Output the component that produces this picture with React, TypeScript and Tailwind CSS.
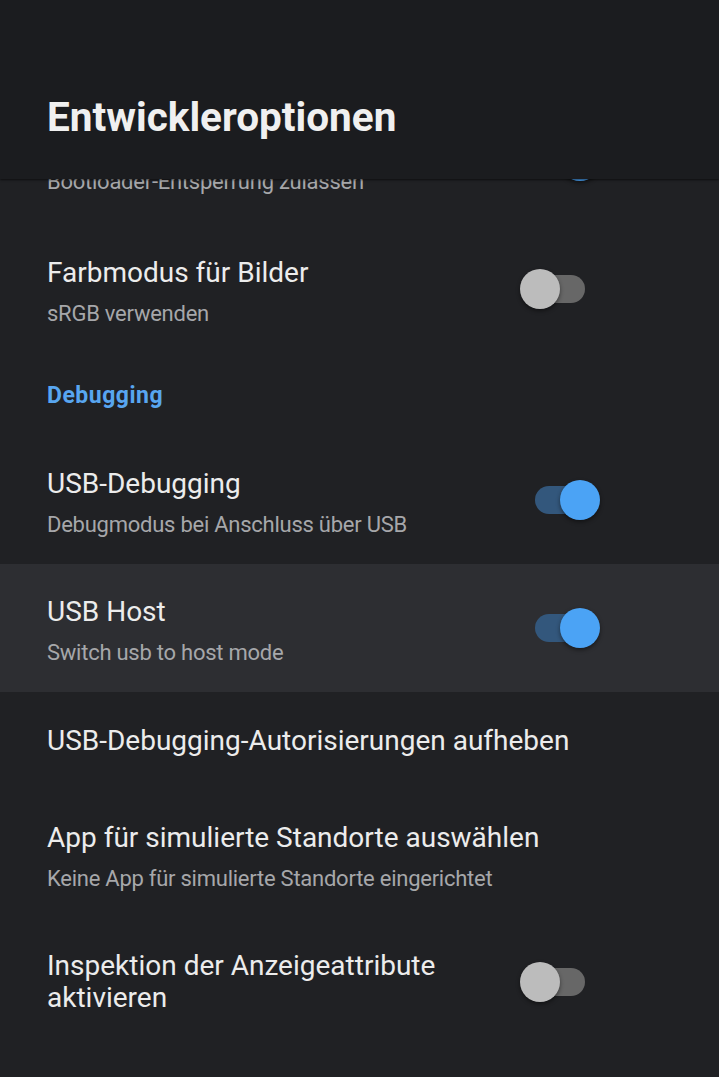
import React from "react";

function Toggle({ on }: { on: boolean }) {
  return (
    <div className="relative h-[40px] w-[80px] shrink-0">
      <div
        className={
          on
            ? "absolute left-[15px] top-[6px] h-[28px] w-[50px] rounded-full bg-[#33577c]"
            : "absolute left-[15px] top-[6px] h-[28px] w-[50px] rounded-full bg-[#676767]"
        }
      />
      <div
        className={
          on
            ? "absolute left-[40px] top-0 h-[40px] w-[40px] rounded-full bg-[#4ba3f5] shadow-[0_2px_4px_rgba(0,0,0,0.45)]"
            : "absolute left-0 top-0 h-[40px] w-[40px] rounded-full bg-[#bcbcbc] shadow-[0_2px_4px_rgba(0,0,0,0.45)]"
        }
      />
    </div>
  );
}

function Row({
  title,
  subtitle,
  toggle,
  highlight,
  textClass,
}: {
  title: React.ReactNode;
  subtitle?: string;
  toggle?: boolean;
  highlight?: boolean;
  textClass?: string;
}) {
  return (
    <div className={"flex items-center pl-[47px] pr-[119px] " + (highlight ? "bg-[#2d2e32]" : "")}>
      <div className={"min-w-0 flex-1 " + (textClass ?? "")}>
        <div className="text-[28px] leading-[32px] text-[#ececec]">{title}</div>
        {subtitle && (
          <div className="mt-[11px] text-[22px] leading-[28px] tracking-[-0.25px] text-[#a6a7aa]">{subtitle}</div>
        )}
      </div>
      {toggle !== undefined && <Toggle on={toggle} />}
    </div>
  );
}

export default function App() {
  return (
    <div
      className="relative h-[1077px] w-[719px] overflow-hidden bg-[#202124]"
      style={{ fontFamily: "Roboto, 'Noto Sans', sans-serif" }}
    >
      <header className="relative z-10 h-[179px] bg-[#1b1c1f] pl-[47px] pt-[93px] shadow-[0_1px_2px_rgba(0,0,0,0.6)]">
        <h1 className="text-[40.5px] font-bold leading-[48px] text-[#f0f0f0]">Entwickleroptionen</h1>
      </header>
      <main className="relative">
        <div className="flex h-[46px] items-start overflow-hidden pl-[47px] pr-[119px]">
          <div className="-mt-[11px] flex-1 text-[22px] leading-[28px] tracking-[-0.25px] text-[#a6a7aa]">
            Bootloader-Entsperrung zulassen
          </div>
          <div className="-mt-[38px]">
            <Toggle on={true} />
          </div>
        </div>
        <Row textClass="pb-[25px] pt-[32px]" title="Farbmodus für Bilder" subtitle="sRGB verwenden" toggle={false} />
        <div className="pb-[26px] pl-[47px] pt-[29px] text-[23px] font-bold leading-[28px] tracking-[0.5px] text-[#58a6f0]">
          Debugging
        </div>
        <Row
          textClass="pb-[25px] pt-[32px]"
          title="USB-Debugging"
          subtitle="Debugmodus bei Anschluss über USB"
          toggle={true}
        />
        <Row
          textClass="pb-[25px] pt-[32px]"
          title="USB Host"
          subtitle="Switch usb to host mode"
          toggle={true}
          highlight
        />
        <div className="pb-[33px] pl-[47px] pt-[33px] text-[28px] leading-[32px] text-[#ececec]">
          USB-Debugging-Autorisierungen aufheben
        </div>
        <Row
          textClass="pb-[25px] pt-[32px]"
          title="App für simulierte Standorte auswählen"
          subtitle="Keine App für simulierte Standorte eingerichtet"
        />
        <Row
          textClass="pb-[32px] pt-[32px]"
          title="Inspektion der Anzeigeattribute aktivieren"
          toggle={false}
        />
      </main>
    </div>
  );
}
